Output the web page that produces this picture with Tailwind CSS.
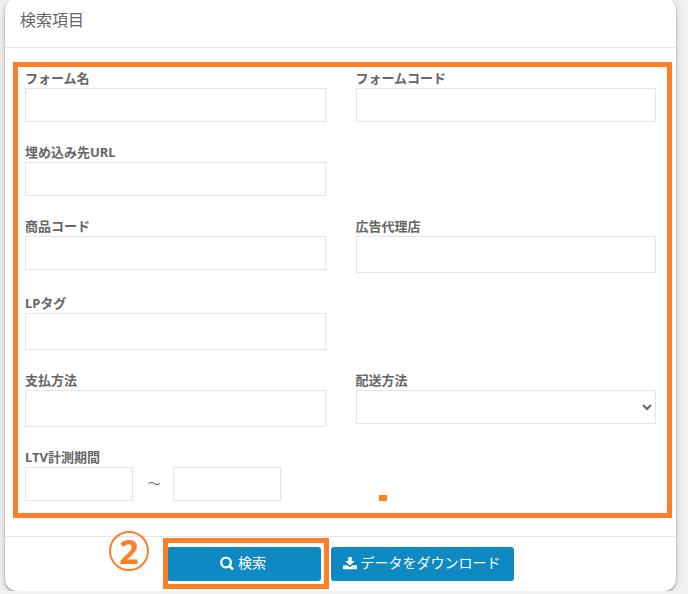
<!DOCTYPE html>
<html lang="ja">
<head>
    <meta charset="UTF-8">
    <meta name="viewport" content="width=device-width, initial-scale=1.0">
    <title>検索項目</title>
    <!-- Tailwind CSS CDN -->
    <script src="https://cdn.jsdelivr.net/npm/@tailwindcss/browser@4"></script>
</head>
<body class="bg-[#f1f1f1] font-['Noto_Sans','Noto_Sans_CJK_JP',sans-serif] text-[#666666]">
    <!-- Search card -->
    <form class="-mt-0.5 mr-3 ml-[5px] rounded-xl bg-white shadow-[0_1px_2px_rgba(0,0,0,0.4),0_2px_8px_rgba(0,0,0,0.15)]">
        <h1 class="border-b border-[#e5e5e5] px-[15px] pt-2.5 pb-[15px] text-base leading-6">検索項目</h1>

        <!-- Search fields -->
        <div class="pt-3.5 pr-1 pb-[18px] pl-2">
            <div class="grid grid-cols-2 gap-x-[30px] gap-y-5 border-5 border-[#ff7f27] pt-px pr-[11px] pb-3 pl-[7px]">
                <div>
                    <label for="formName" class="block text-[13px] leading-5 font-bold">フォーム名</label>
                    <input type="text" id="formName" class="block h-[34px] w-full border border-[#e5e5e5] px-3 text-sm">
                </div>
                <div>
                    <label for="formCode" class="block text-[13px] leading-5 font-bold">フォームコード</label>
                    <input type="text" id="formCode" class="block h-[34px] w-full border border-[#e5e5e5] px-3 text-sm">
                </div>
                <div class="col-span-2 grid grid-cols-2 gap-x-[30px]">
                    <div>
                        <label for="embedUrl" class="block text-[13px] leading-5 font-bold">埋め込み先URL</label>
                        <input type="text" id="embedUrl" class="block h-[34px] w-full border border-[#e5e5e5] px-3 text-sm">
                    </div>
                </div>
                <div>
                    <label for="productCode" class="block text-[13px] leading-5 font-bold">商品コード</label>
                    <input type="text" id="productCode" class="block h-[34px] w-full border border-[#e5e5e5] px-3 text-sm">
                </div>
                <div>
                    <label for="agency" class="block text-[13px] leading-5 font-bold">広告代理店</label>
                    <input type="text" id="agency" class="block h-[37px] w-full border border-[#e5e5e5] px-3 text-sm">
                </div>
                <div class="col-span-2 grid grid-cols-2 gap-x-[30px]">
                    <div>
                        <label for="lpTag" class="block text-[13px] leading-5 font-bold">LPタグ</label>
                        <input type="text" id="lpTag" class="block h-[37px] w-full border border-[#e5e5e5] px-3 text-sm">
                    </div>
                </div>
                <div>
                    <label for="payment" class="block text-[13px] leading-5 font-bold">支払方法</label>
                    <input type="text" id="payment" class="block h-[37px] w-full border border-[#e5e5e5] px-3 text-sm">
                </div>
                <div>
                    <label for="delivery" class="block text-[13px] leading-5 font-bold">配送方法</label>
                    <select id="delivery" class="block h-[34px] w-full border border-[#e5e5e5] bg-white text-sm">
                        <option value=""></option>
                    </select>
                </div>
                <div>
                    <label for="ltvFrom" class="block text-[13px] leading-5 font-bold">LTV計測期間</label>
                    <div class="flex items-center">
                        <input type="text" id="ltvFrom" class="h-[34px] w-27 border border-[#e5e5e5] px-3 text-sm">
                        <span class="w-10 pl-0.5 text-center text-[13px]">～</span>
                        <input type="text" id="ltvTo" aria-label="LTV計測期間 終了" class="h-[34px] w-27 border border-[#e5e5e5] px-3 text-sm">
                    </div>
                </div>
                <div class="relative">
                    <span class="absolute top-12 left-[23px] h-1.5 w-2 bg-[#ff7f27]"></span>
                </div>
            </div>
        </div>

        <!-- Actions -->
        <div class="flex justify-center gap-2.5 border-t border-[#e5e5e5] py-2.5">
            <div class="relative">
                <button type="submit" class="flex h-[34px] w-[154px] items-center justify-center gap-1 rounded-[3px] bg-[#0f89c1] pr-0.5 pb-0.5 text-sm text-white">
                    <svg class="size-3.5" viewBox="0 0 14 14" fill="none" stroke="currentColor" aria-hidden="true">
                        <circle cx="6" cy="6.500" r="4.800" stroke-width="2.300"/>
                        <path d="M9.500 10L12.300 12.800" stroke-width="2.600" stroke-linecap="round"/>
                    </svg>
                    検索
                </button>
                <!-- Step marker -->
                <span class="pointer-events-none absolute -top-[9px] -right-2 -bottom-2 -left-1 border-5 border-[#ff7f27]"></span>
                <span class="absolute -top-4 -left-[58px] flex size-10 items-center justify-center rounded-full border-2 border-[#ff7f27] text-[34px] leading-none font-bold text-[#ff7f27]">2</span>
            </div>
            <button type="button" class="flex h-[34px] w-[183px] items-center justify-center gap-1 rounded-[3px] bg-[#0f89c1] pr-0.5 pb-0.5 text-sm text-white">
                <svg class="size-3.5" viewBox="0 0 14 14" fill="currentColor" aria-hidden="true">
                    <path d="M5.200 1h3.600v4h3L7 9.400 2.200 5h3z"/>
                    <path fill-rule="evenodd" d="M.6 9.300h3.800L7 11.200l2.600-1.900h3.800q.6 0 .6.6v2.700q0 .6-.6.6H.6q-.6 0-.6-.6V9.900q0-.6.6-.6zM9.500 11.500v.8h.8v-.8zM11.700 11.500v.8h.8v-.8z"/>
                </svg>
                データをダウンロード
            </button>
        </div>
    </form>
</body>
</html>
